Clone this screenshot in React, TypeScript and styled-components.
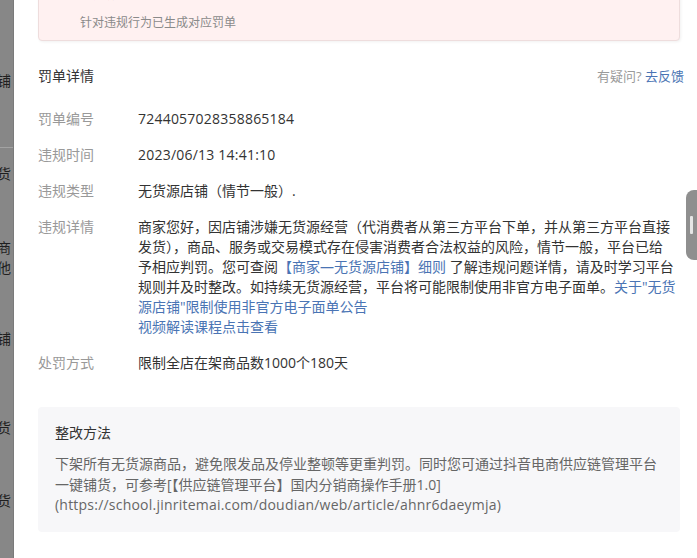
import React from "react";
import styled, { createGlobalStyle } from "styled-components";

const Global = createGlobalStyle`
  html, body { margin: 0; padding: 0; background: #fff; }
  body {
    font-family: "Open Sans", "Noto Sans CJK SC", sans-serif;
    font-size: 14px;
    color: #333;
    overflow: hidden;
  }
`;

const Page = styled.div`
  position: relative;
  display: flex;
  width: 697px;
  height: 558px;
  overflow: hidden;
`;

const Strip = styled.div`
  width: 13px;
  flex-shrink: 0;
  background: #878787;
  border-right: 1px solid #7a7a7a;
  overflow: hidden;
  display: flex;
  flex-direction: column;
`;

const StripText = styled.div<{ $mt: number }>`
  margin-top: ${(p) => p.$mt}px;
  height: 20px;
  line-height: 20px;
  display: flex;
  justify-content: flex-end;
  padding-right: 2px;
  white-space: nowrap;
  color: #1f1f1f;
  font-size: 14px;
  font-family: "Noto Sans CJK SC", sans-serif;
`;

const StripLine = styled.div<{ $mt: number }>`
  margin-top: ${(p) => p.$mt}px;
  height: 1px;
  background: #a3a3a3;
`;

const Main = styled.div`
  flex: 1;
  padding: 0 17px 0 24px;
  display: flex;
  flex-direction: column;
`;

const Alert = styled.div`
  margin-top: -28px;
  background: #fff1f1;
  border: 1px solid #eedddd;
  border-radius: 4px;
  box-shadow: 1px 1px 3px rgba(0, 0, 0, 0.06);
  padding: 10px 16px 7px 20px;
  display: flex;
  flex-direction: column;
`;

const AlertTitle = styled.div`
  display: flex;
  align-items: center;
  gap: 8px;
  line-height: 20px;
  height: 20px;
  font-size: 14px;
  font-weight: 600;
  color: #333;
`;

const AlertIcon = styled.span`
  width: 12px;
  height: 12px;
  border-radius: 50%;
  background: #e34d4d;
  display: inline-block;
`;

const AlertDesc = styled.div`
  margin-top: 10px;
  padding-left: 21px;
  font-size: 12px;
  line-height: 20px;
  color: #8a8a8a;
`;

const SectionHead = styled.div`
  margin-top: 25px;
  margin-right: -4px;
  display: flex;
  justify-content: space-between;
  align-items: center;
  line-height: 20px;
`;

const SectionTitle = styled.div`
  font-size: 14px;
  color: #333;
`;

const Feedback = styled.div`
  font-size: 13px;
  color: #9a9a9a;
`;

const Link = styled.a`
  color: #4a74b4;
  text-decoration: none;
  cursor: pointer;
`;

const Latin = styled.span`
  letter-spacing: 0.22px;
`;

const Rows = styled.div`
  margin-top: 23px;
  display: flex;
  flex-direction: column;
  gap: 16px;
`;

const Row = styled.div`
  display: flex;
  line-height: 20px;
`;

const Label = styled.div`
  width: 100px;
  flex-shrink: 0;
  color: #999;
`;

const Value = styled.div<{ $nowrap?: boolean }>`
  flex: 1;
  color: #333;
  white-space: ${(p) => (p.$nowrap ? "nowrap" : "normal")};
`;

const FixBox = styled.div`
  margin-top: 34px;
  background: #f7f7f9;
  border-radius: 4px;
  padding: 16px 17px 16px 17px;
  display: flex;
  flex-direction: column;
`;

const FixTitle = styled.div`
  line-height: 20px;
  color: #333;
  font-size: 14px;
`;

const FixText = styled.div`
  margin-top: 11px;
  line-height: 20.5px;
  color: #666;
  white-space: nowrap;
`;

const Pill = styled.div`
  position: absolute;
  right: 0;
  top: 190px;
  width: 11px;
  height: 70px;
  background: #8f8f8f;
  border-radius: 8px 0 0 8px;
  display: flex;
  align-items: center;
  padding-left: 4px;
  box-sizing: border-box;
`;

const PillBar = styled.div`
  width: 3px;
  height: 18px;
  background: #e6e6e6;
  border-radius: 1px;
`;

export default function App() {
  return (
    <>
      <Global />
      <Page>
        <Strip>
          <StripText $mt={70}>店铺</StripText>
          <StripLine $mt={57} />
          <StripText $mt={15}>铺货</StripText>
          <StripText $mt={54}>商</StripText>
          <StripText $mt={0}>其他</StripText>
          <StripText $mt={51}>店铺</StripText>
          <StripText $mt={69}>铺货</StripText>
          <StripText $mt={53}>铺货</StripText>
        </Strip>
        <Main>
          <Alert>
            <AlertTitle>
              <AlertIcon />
              已违规
            </AlertTitle>
            <AlertDesc>针对违规行为已生成对应罚单</AlertDesc>
          </Alert>

          <SectionHead>
            <SectionTitle>罚单详情</SectionTitle>
            <Feedback>
              有疑问? <Link>去反馈</Link>
            </Feedback>
          </SectionHead>

          <Rows>
            <Row>
              <Label>罚单编号</Label>
              <Value>
                <Latin>7244057028358865184</Latin>
              </Value>
            </Row>
            <Row>
              <Label>违规时间</Label>
              <Value>
                <Latin>2023/06/13 14:41:10</Latin>
              </Value>
            </Row>
            <Row>
              <Label>违规类型</Label>
              <Value>无货源店铺（情节一般）.</Value>
            </Row>
            <Row>
              <Label>违规详情</Label>
              <Value $nowrap>
                商家您好，因店铺涉嫌无货源经营（代消费者从第三方平台下单，并从第三方平台直接
                <br />
                发货），商品、服务或交易模式存在侵害消费者合法权益的风险，情节一般，平台已给
                <br />
                予相应判罚。您可查阅<Link>【商家—无货源店铺】细则</Link> 了解违规问题详情，请及时学习平台
                <br />
                规则并及时整改。如持续无货源经营，平台将可能限制使用非官方电子面单。<Link>关于"无货</Link>
                <br />
                <Link>源店铺"限制使用非官方电子面单公告</Link>
                <br />
                <Link>视频解读课程点击查看</Link>
              </Value>
            </Row>
            <Row>
              <Label>处罚方式</Label>
              <Value>限制全店在架商品数1000个180天</Value>
            </Row>
          </Rows>

          <FixBox>
            <FixTitle>整改方法</FixTitle>
            <FixText>
              下架所有无货源商品，避免限发品及停业整顿等更重判罚。同时您可通过抖音电商供应链管理平台
              <br />
              一键铺货，可参考[【供应链管理平台】国内分销商操作手册1.0]
              <br />
              <Latin>(https://school.jinritemai.com/doudian/web/article/ahnr6daeymja)</Latin>
            </FixText>
          </FixBox>
        </Main>
        <Pill>
          <PillBar />
        </Pill>
      </Page>
    </>
  );
}
